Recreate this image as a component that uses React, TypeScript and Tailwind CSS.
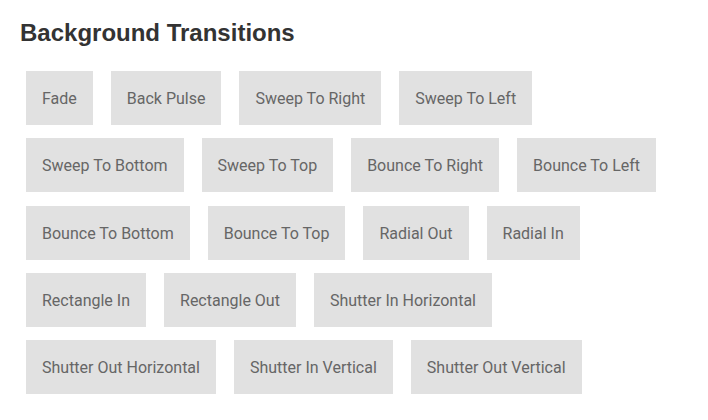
const effects = [
  "Fade",
  "Back Pulse",
  "Sweep To Right",
  "Sweep To Left",
  "Sweep To Bottom",
  "Sweep To Top",
  "Bounce To Right",
  "Bounce To Left",
  "Bounce To Bottom",
  "Bounce To Top",
  "Radial Out",
  "Radial In",
  "Rectangle In",
  "Rectangle Out",
  "Shutter In Horizontal",
  "Shutter Out Horizontal",
  "Shutter In Vertical",
  "Shutter Out Vertical",
];

export default function App() {
  return (
    <div className="min-h-[420px] w-[708px] bg-white">
      <div className="pl-[20px] pt-[21px]">
        <h1 className="font-['Liberation_Sans',Arial,sans-serif] text-[24px] font-bold leading-[24px] text-[#333]">
          Background Transitions
        </h1>
      </div>
      <div className="mt-[26px] flex w-[672px] flex-wrap gap-x-[18px] gap-y-[13.25px] pl-[26px]">
        {effects.map((name) => (
          <a
            key={name}
            href="#"
            className="block h-[54px] cursor-pointer bg-[#e1e1e1] px-4 pt-[17px] pb-[15px] font-['Roboto',sans-serif] text-[16px] leading-[22px] whitespace-nowrap text-[#666]"
          >
            {name}
          </a>
        ))}
      </div>
    </div>
  );
}
